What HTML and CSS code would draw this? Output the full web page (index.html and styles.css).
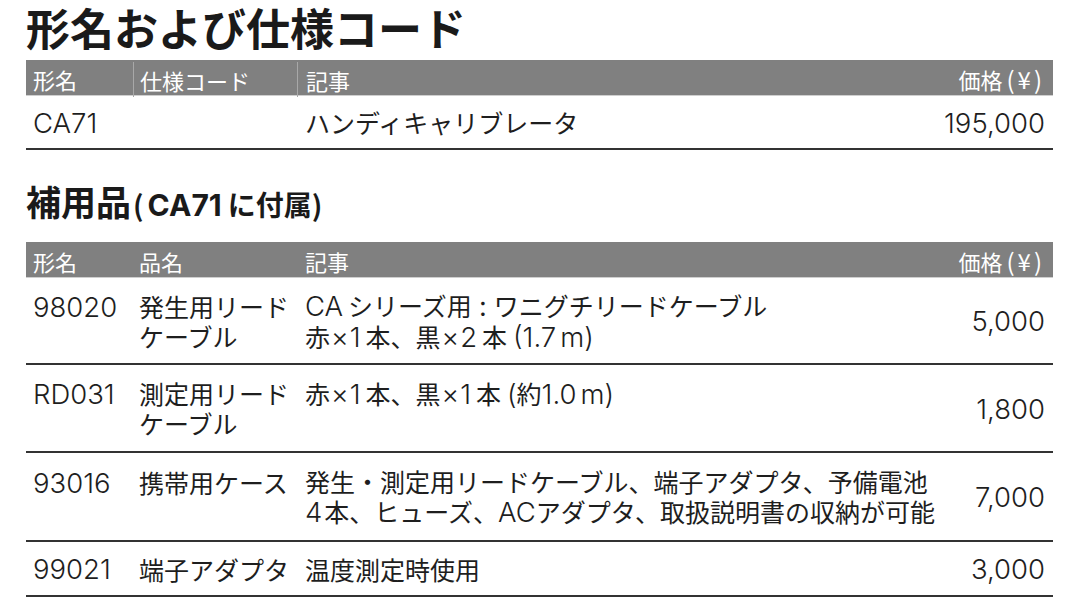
FILE: index.html
```html
<!DOCTYPE html>
<html lang="ja">
<head>
<meta charset="utf-8">
<link rel="stylesheet" href="styles.css">
</head>
<body>
<div class="page">
  <h1 class="title">形名および仕様コード</h1>
  <div class="tbl">
    <div class="row head sep">
      <div class="c1">形名</div>
      <div class="c2">仕様コード</div>
      <div class="c3">記事</div>
      <div class="c4">価格<span class="yen">(¥)</span></div>
    </div>
    <div class="row r-main">
      <div class="c1"><span class="n">CA71</span></div>
      <div class="c2"></div>
      <div class="c3">ハンディキャリブレータ</div>
      <div class="c4"><span class="n">195,000</span></div>
    </div>
  </div>

  <h2 class="sub">補用品<span class="sub-note">(<span class="sn">CA71</span>に付属)</span></h2>
  <div class="tbl">
    <div class="row head">
      <div class="c1">形名</div>
      <div class="c2">品名</div>
      <div class="c3">記事</div>
      <div class="c4">価格<span class="yen">(¥)</span></div>
    </div>
    <div class="row two r-a">
      <div class="c1"><span class="n">98020</span></div>
      <div class="c2">発生用リード<br>ケーブル</div>
      <div class="c3"><span class="n gap">CA</span>シリーズ用<span class="colon">:</span>ワニグチリードケーブル<br>赤<span class="x">×</span><span class="n gap">1</span>本、黒<span class="x">×</span><span class="n gap">2</span>本<span class="n pl">(1.7</span><span class="n ml">m)</span></div>
      <div class="c4"><span class="n">5,000</span></div>
    </div>
    <div class="row two r-b">
      <div class="c1"><span class="n">RD031</span></div>
      <div class="c2">測定用リード<br>ケーブル</div>
      <div class="c3">赤<span class="x">×</span><span class="n gap">1</span>本、黒<span class="x">×</span><span class="n gap">1</span>本<span class="n pl">(</span>約<span class="n">1.0</span><span class="n ml">m)</span><br>&nbsp;</div>
      <div class="c4"><span class="n">1,800</span></div>
    </div>
    <div class="row two r-c">
      <div class="c1"><span class="n">93016</span></div>
      <div class="c2">携帯用ケース<br>&nbsp;</div>
      <div class="c3">発生・測定用リードケーブル、端子アダプタ、予備電池<br><span class="n gap-s">4</span>本、ヒューズ、<span class="n">AC</span>アダプタ、取扱説明書の収納が可能</div>
      <div class="c4"><span class="n">7,000</span></div>
    </div>
    <div class="row r-d">
      <div class="c1"><span class="n">99021</span></div>
      <div class="c2">端子アダプタ</div>
      <div class="c3">温度測定時使用</div>
      <div class="c4"><span class="n">3,000</span></div>
    </div>
  </div>
</div>
</body>
</html>
```

FILE: styles.css
```css
html, body {
  margin: 0;
  padding: 0;
  background: #ffffff;
}

body {
  font-family: "Noto Sans CJK JP", sans-serif;
  color: #1e1e1e;
}

.page {
  width: 1027px;
  padding-left: 26px;
}

.title {
  margin: 0 0 3px 0;
  height: 57px;
  line-height: 55px;
  font-size: 44px;
  font-weight: 700;
  color: #1a1a1a;
  white-space: nowrap;
}

.sub {
  margin: 36px 0 26px 0;
  height: 30px;
  line-height: 30px;
  font-size: 35px;
  font-weight: 700;
  color: #1a1a1a;
  white-space: nowrap;
}

.sub-note {
  font-size: 28px;
  margin-left: 2px;
}

.sn {
  font-family: "Inter", "Noto Sans CJK JP", sans-serif;
  font-size: 30px;
  font-weight: 700;
  margin-left: 4px;
  margin-right: 6px;
}

.tbl {
  display: flex;
  flex-direction: column;
}

.row {
  display: grid;
  grid-template-columns: 107px 164px 1fr 110px;
  align-items: center;
  font-size: 25px;
  line-height: 30px;
  border-bottom: 2px solid #333333;
  white-space: nowrap;
}

.row.two .c1 {
  height: 60px;
}

.n {
  font-family: "Inter", sans-serif;
  font-size: 27.5px;
  font-weight: 300;
  line-height: 1;
}

.gap {
  margin-right: 5px;
}

.gap-s {
  margin-right: 2px;
}

.pl {
  margin-left: 6px;
}

.ml {
  margin-left: 4px;
}

.x {
  font-family: "Inter", sans-serif;
  font-size: 27px;
  font-weight: 300;
  line-height: 1;
  margin: 0 1px;
}

.colon {
  font-family: "Inter", sans-serif;
  font-size: 27px;
  line-height: 1;
  margin: 0 7px;
}

.row.head {
  height: 35px;
  background: #808080;
  color: #ffffff;
  font-size: 22px;
  line-height: 37px;
  border-bottom: 1px solid #cfcfcf;
}

.row.head.sep .c2,
.row.head.sep .c3 {
  border-left: 1px solid #a8a8a8;
  height: 35px;
}

.c1 {
  padding-left: 7px;
}

.c2 {
  padding-left: 6px;
}

.c3 {
  padding-left: 8px;
}

.c4 {
  text-align: right;
  padding-right: 8px;
}

.yen {
  margin-left: 4px;
  letter-spacing: 3px;
  font-size: 24px;
}

.r-main { height: 52px; }
.r-a { height: 85px; }
.r-b { height: 86px; }
.r-c { height: 87px; }
.r-d { height: 53px; }
```
